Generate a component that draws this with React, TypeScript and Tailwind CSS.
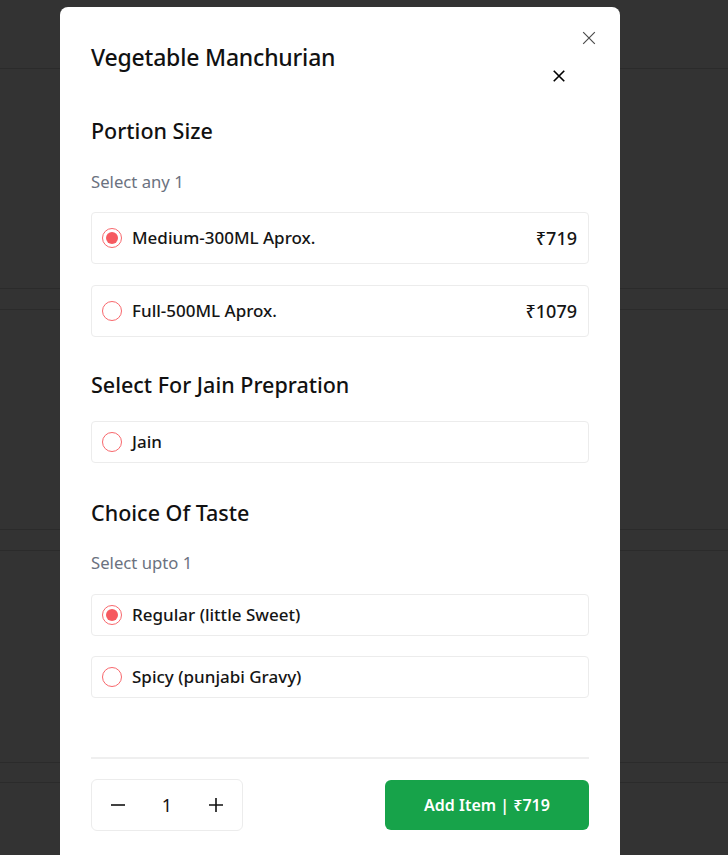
import { useState } from 'react';

type Option = { label: string; price?: string };

const portions: Option[] = [
	{ label: 'Medium-300ML Aprox.', price: '₹719' },
	{ label: 'Full-500ML Aprox.', price: '₹1079' },
];
const jain: Option[] = [{ label: 'Jain' }];
const tastes: Option[] = [
	{ label: 'Regular (little Sweet)' },
	{ label: 'Spicy (punjabi Gravy)' },
];

const CloseIcon = ({ className }: { className: string }) => (
	<svg viewBox="0 0 24 24" className={className} fill="none" stroke="currentColor">
		<path d="M5 5l14 14M19 5L5 19" />
	</svg>
);

const Radio = ({ checked }: { checked: boolean }) => (
	<span className="flex h-5 w-5 shrink-0 items-center justify-center rounded-full border border-[#f8676c] bg-white">
		{checked && <span className="h-3 w-3 rounded-full bg-[#f65a60]" />}
	</span>
);

const OptionRow = ({
	option,
	checked,
	onClick,
}: {
	readonly option: Option;
	readonly checked: boolean;
	readonly onClick: () => void;
}) => (
	<button
		onClick={onClick}
		className={`flex w-full items-center gap-[10px] rounded-[4px] border border-[#ececec] bg-white pl-[10px] pr-[11px] text-left ${
			option.price ? 'h-[52px]' : 'h-[42px]'
		}`}
	>
		<Radio checked={checked} />
		<span className="flex-1 text-[17px] font-medium text-[#151515]">{option.label}</span>
		{option.price && <span className="text-[18px] font-medium text-[#151515]">{option.price}</span>}
	</button>
);

export default function App() {
	const [portion, setPortion] = useState(0);
	const [isJain, setIsJain] = useState(false);
	const [taste, setTaste] = useState(0);
	const [qty, setQty] = useState(1);

	return (
		<div className="relative h-[855px] w-full overflow-hidden bg-[#333333] font-['Noto_Sans',sans-serif]">
			{/* page behind the overlay */}
			<div className="flex flex-col">
				<div className="h-[69px] border-b border-[#2b2b2b]" />
				<div className="h-[220px] border-b border-[#2b2b2b]" />
				<div className="mt-[20px] h-[221px] border-y border-[#2b2b2b]" />
				<div className="mt-[20px] h-[213px] border-y border-[#2b2b2b]" />
				<div className="mt-[19px] h-[80px] border-t border-[#2b2b2b]" />
			</div>

			<div className="absolute left-[60px] top-[7px] h-[900px] w-[560px] rounded-[8px] bg-white px-[31px] pt-[35px]">
				<button className="absolute right-[21px] top-[21px] text-[#4b4b4b]">
					<CloseIcon className="h-[20px] w-[20px] stroke-[1.4]" />
				</button>

				<div className="flex items-start justify-between">
					<h2 className="text-[23px] font-medium leading-[30px] tracking-[-0.2px] text-[#111]">
						Vegetable Manchurian
					</h2>
					<button className="mr-[21px] mt-[25px] text-black">
						<CloseIcon className="h-[18px] w-[18px] stroke-[2.2]" />
					</button>
				</div>

				<h3 className="mt-[32px] text-[21.5px] font-medium leading-[28px] text-[#111]">Portion Size</h3>
				<p className="mt-[25px] text-[16.7px] leading-6 text-[#6b7280]">Select any 1</p>
				<div className="mt-[18px] flex flex-col gap-[21px]">
					{portions.map((o, i) => (
						<OptionRow key={o.label} option={o} checked={portion === i} onClick={() => setPortion(i)} />
					))}
				</div>

				<h3 className="mt-[34px] text-[21.5px] font-medium leading-[28px] text-[#111]">
					Select For Jain Prepration
				</h3>
				<div className="mt-[22px] flex flex-col">
					{jain.map((o) => (
						<OptionRow key={o.label} option={o} checked={isJain} onClick={() => setIsJain(!isJain)} />
					))}
				</div>

				<h3 className="mt-[36px] text-[21.5px] font-medium leading-[28px] text-[#111]">Choice Of Taste</h3>
				<p className="mt-[24px] text-[16.7px] leading-6 text-[#6b7280]">Select upto 1</p>
				<div className="mt-[19px] flex flex-col gap-[20px]">
					{tastes.map((o, i) => (
						<OptionRow key={o.label} option={o} checked={taste === i} onClick={() => setTaste(i)} />
					))}
				</div>

				<div className="mt-[59px] border-t-2 border-[#efefef]" />

				<div className="mt-[20px] flex items-center justify-between">
					<div className="flex h-[52px] w-[152px] items-center justify-between rounded-[6px] border border-[#ececec] px-[18px] text-[#111]">
						<button onClick={() => setQty(Math.max(1, qty - 1))} className="text-[24px] leading-none">
							<svg viewBox="0 0 16 16" className="h-[16px] w-[16px]" stroke="currentColor" strokeWidth={1.6}>
								<path d="M1 8h14" />
							</svg>
						</button>
						<span className="text-[18px]">{qty}</span>
						<button onClick={() => setQty(qty + 1)}>
							<svg viewBox="0 0 16 16" className="h-[16px] w-[16px]" stroke="currentColor" strokeWidth={1.6}>
								<path d="M1 8h14M8 1v14" />
							</svg>
						</button>
					</div>
					<button className="h-[50px] w-[204px] rounded-[6px] bg-[#17a34a] text-[16px] font-semibold text-white">
						Add Item | ₹719
					</button>
				</div>
			</div>
		</div>
	);
}
